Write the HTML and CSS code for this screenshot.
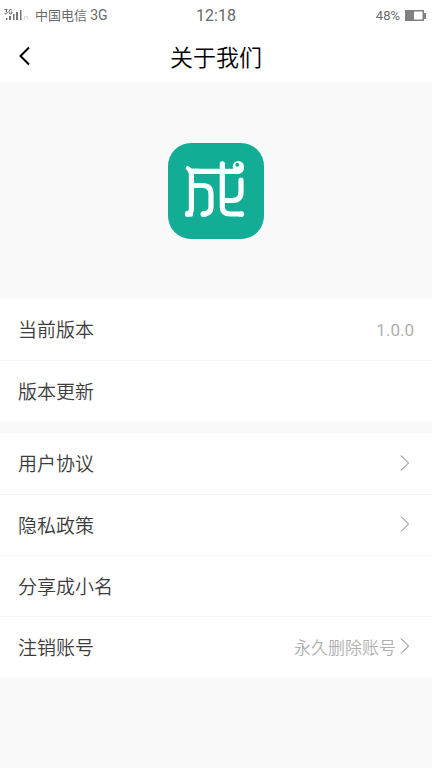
FILE: index.html
```html
<!DOCTYPE html>
<html lang="zh-CN">
<head>
<meta charset="utf-8">
<meta name="viewport" content="width=device-width, initial-scale=1">
<title>关于我们</title>
<link rel="stylesheet" href="styles.css">
</head>
<body>
<div class="status">
  <div class="carrier">
    <svg width="26" height="16" viewBox="0 0 26 16" aria-hidden="true">
      <g fill="none" stroke="#666" stroke-width="1">
        <path d="M.5 1.500H3.200L1.800 3.400Q3.600 3.400 3.400 4.900Q2.500 6.500 .5 5.600M8 2.200Q6.800 1 5.500 1.800Q4.600 3.500 5.300 5.400Q6.800 6.500 8 5.400V4H6.800"/>
      </g>
      <path fill="#777" d="M2 10h1.500v2H2zM5 8h2v4H5zM9 6h1.500v6H9zM12 4h2v8h-2zM16 2h1.500v10H16z"/>
      <path fill="none" stroke="#ddd" d="M20.500 8v4M20.500 8.500h3v3.500M22 10h1.500"/>
    </svg>
    <span>中国电信 <span class="network">3G</span></span>
  </div>
  <time class="clock">12:18</time>
  <div class="power">
    <span>48%</span>
    <svg width="23" height="12" viewBox="0 0 23 12" aria-hidden="true">
      <path fill="#808080" fill-rule="evenodd" d="M0 0h19v3h2v6h-2v2H0zM9 1.500v8h8.500v-8z"/>
    </svg>
  </div>
</div>
<header class="nav">
  <button class="back" type="button" aria-label="返回">
    <svg width="12" height="20" viewBox="0 0 12 20" aria-hidden="true"><path d="M11 1.500L2.500 10l8.500 8.500"/></svg>
  </button>
  <h1>关于我们</h1>
</header>
<main>
  <div class="hero">
    <svg width="96" height="96" viewBox="0 0 96 96" role="img" aria-label="成小名">
      <rect width="96" height="96" rx="23" fill="#13ad95"/>
      <g fill="none" stroke="#fff" stroke-width="5.200" stroke-linejoin="round">
        <path stroke-linecap="round" d="M54.300 20.800V28M24 28.300H70M73 37V49Q73 57.500 64 57.500H55"/>
        <path d="M23.400 28.500V66Q23.400 71 18 71"/>
        <path d="M23.400 42.500H34.500Q43 42.500 43 51V64Q43 71 34 71"/>
        <path d="M54.300 27V63.500Q54.300 71 62 71H75"/>
      </g>
      <g fill="#fff">
        <path d="M17.500 25.500Q18.200 22 21 23.500L24 25.700H31V31H21Q20.500 28 17.500 25.500z"/>
        <rect x="17" y="68" width="8" height="5.700" rx="2"/>
        <rect x="32.500" y="68.400" width="7" height="5.300" rx="2"/>
        <rect x="70" y="68.400" width="6" height="5.300" rx="2"/>
        <circle cx="70.300" cy="23.500" r="5.600"/>
        <path d="M70 26l5.900-2.500q.6 7.400-6.600 7.400z"/>
      </g>
      <circle cx="69.300" cy="21.800" r="2" fill="#13ad95"/>
    </svg>
  </div>
  <ul class="group">
    <li class="row"><span>当前版本</span><span class="version">1.0.0</span></li>
    <li><button class="row" type="button">版本更新</button></li>
  </ul>
  <ul class="group">
    <li><a class="row" href="#agreement">用户协议<svg class="chevron" width="10" height="16" viewBox="0 0 10 16" aria-hidden="true"><path d="M1 .5L8.500 8L1 15.500"/></svg></a></li>
    <li><a class="row" href="#privacy">隐私政策<svg class="chevron" width="10" height="16" viewBox="0 0 10 16" aria-hidden="true"><path d="M1 .5L8.500 8L1 15.500"/></svg></a></li>
    <li><button class="row" type="button">分享成小名</button></li>
    <li><a class="row" href="#cancel">注销账号<span class="note">永久删除账号<svg class="chevron" width="10" height="16" viewBox="0 0 10 16" aria-hidden="true"><path d="M1 .5L8.500 8L1 15.500"/></svg></span></a></li>
  </ul>
</main>
</body>
</html>
```
FILE: styles.css
```css
* {
  box-sizing: border-box;
}

body {
  margin: 0;
  min-height: 100vh;
  background: #f9f9f9;
  color: #3c3c3c;
  font-family: Roboto, "Noto Sans CJK SC", sans-serif;
}

svg {
  display: block;
  flex: none;
}

.status {
  display: grid;
  grid-template-columns: 1fr auto 1fr;
  align-items: center;
  height: 31px;
  padding: 0 4px;
  background: #fff;
  color: #6a6a6a;
  font-size: 13px;
}

.carrier,
.power {
  display: flex;
  align-items: center;
  gap: 5px;
}

.carrier {
  align-items: flex-end;
  padding-bottom: 2px;
}

.network {
  font-size: 14px;
}

.power {
  justify-content: flex-end;
}

.clock {
  font-size: 16px;
}

.nav {
  display: grid;
  grid-template-columns: 48px 1fr 48px;
  align-items: center;
  height: 51px;
  padding-bottom: 2px;
  background: #fff;
  color: #000;
}

.nav h1 {
  grid-column: 2;
  margin: 0;
  font-size: 23px;
  font-weight: 350;
  text-align: center;
}

.back {
  display: flex;
  align-items: center;
  height: 48px;
  padding: 0 18px;
  border: 0;
  background: none;
}

.back path,
.chevron path {
  fill: none;
  stroke: #000;
  stroke-width: 2;
}

.hero {
  display: flex;
  justify-content: center;
  padding: 61px 0 60px;
}

.group {
  margin: 0 0 12px;
  padding: 0;
  list-style: none;
  background: #fff;
}

.row {
  display: flex;
  align-items: center;
  justify-content: space-between;
  width: 100%;
  height: 61px;
  padding: 0 18px 2px;
  border: 0;
  background: none;
  color: #3c3c3c;
  font: inherit;
  font-size: 19px;
  font-weight: 350;
  text-decoration: none;
}

li + li .row {
  border-top: 1px solid #f5f5f5;
}

.version,
.note {
  color: #b0b0b0;
  font-size: 17px;
}

.version {
  padding-top: 3px;
  font-weight: 400;
}

.note {
  display: flex;
  align-items: center;
  gap: 4px;
}

.chevron {
  margin-right: 4px;
}

.chevron path {
  stroke: #777;
  stroke-width: 1;
}
```
